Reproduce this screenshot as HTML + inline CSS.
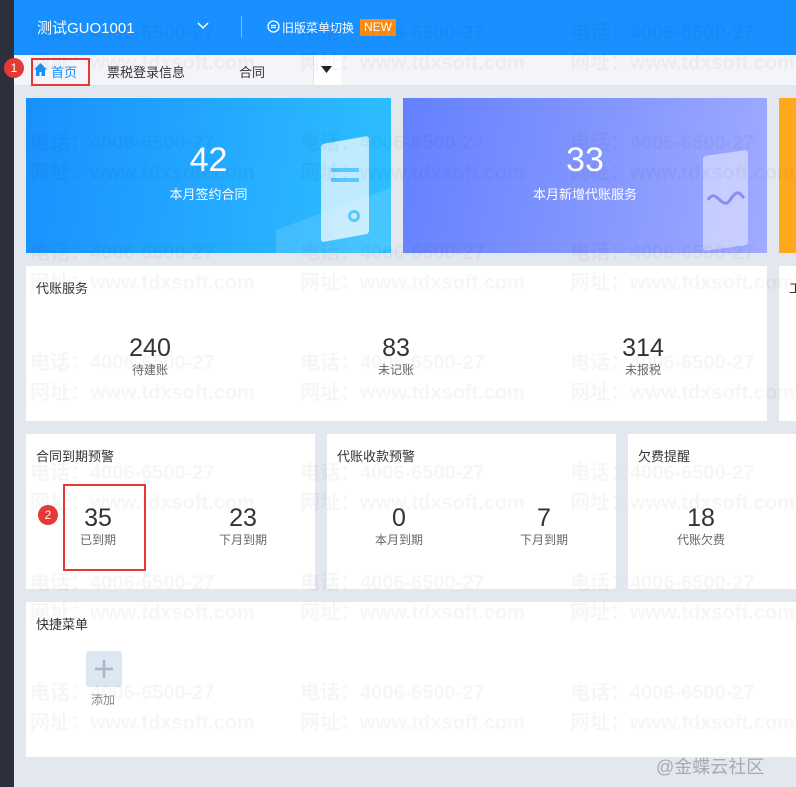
<!DOCTYPE html>
<html><head><meta charset="utf-8">
<style>
*{margin:0;padding:0;box-sizing:border-box}
body{width:796px;height:787px;overflow:hidden;background:#e3e7ee;font-family:"Liberation Sans","Noto Sans CJK SC",sans-serif;position:relative;color:#333}
.side{position:absolute;left:0;top:0;width:14px;height:787px;background:#2d2f3d}
.hdr{position:absolute;left:14px;top:0;right:0;height:55px;background:#1890ff;color:#fff}
.tabs{position:absolute;left:14px;top:55px;right:0;height:31px;background:#f3f5f8;border-bottom:1px solid #e0e4ea}
.card{position:absolute;background:#fff}
.t{position:absolute;left:10px;top:12px;font-size:13px;color:#333}
.st{position:absolute;text-align:center;transform:translateX(-50%)}
.st b{display:block;font-weight:normal;font-size:25px;color:#333;line-height:28px}
.st i{display:block;font-style:normal;font-size:12px;color:#666;line-height:16px}
.wm{position:absolute;font-size:20px;font-weight:bold;color:rgba(0,0,0,0.035);white-space:nowrap;pointer-events:none;z-index:5}
</style></head><body>
<div class="side"></div>
<div class="hdr">
 <div style="position:absolute;left:23px;top:17px;font-size:15px">测试GUO1001</div>
 <svg style="position:absolute;left:183px;top:22px" width="12" height="8"><path d="M1 1l5 5 5-5" stroke="#fff" stroke-width="1.5" fill="none"/></svg>
 <div style="position:absolute;left:227px;top:16px;width:1px;height:22px;background:rgba(255,255,255,.4)"></div>
 <svg style="position:absolute;left:253px;top:20px" width="13" height="13"><circle cx="6.5" cy="6.5" r="5.5" stroke="#fff" stroke-width="1.3" fill="none"/><path d="M4 5.5h5M4 7.5h5" stroke="#fff" stroke-width="1.2"/></svg>
 <div style="position:absolute;left:268px;top:19px;font-size:12px;letter-spacing:0">旧版菜单切换</div>
 <div style="position:absolute;left:346px;top:19px;background:#fa8c16;font-size:12px;padding:1px 4px;line-height:15px">NEW</div>
</div>
<div class="tabs">
 <div style="position:absolute;left:17px;top:3px;width:59px;height:28px;border:2px solid #e53935"></div>
 <svg style="position:absolute;left:19px;top:7px" width="15" height="15"><path d="M7.5 1L1 7.5h2V14h3.5V10h2v4H12V7.5h2z" fill="#1890ff"/></svg>
 <div style="position:absolute;left:37px;top:7px;font-size:13px;color:#1890ff">首页</div>
 <div style="position:absolute;left:93px;top:7px;font-size:13px;color:#333">票税登录信息</div>
 <div style="position:absolute;left:225px;top:7px;font-size:13px;color:#333">合同</div>
 <div style="position:absolute;left:299px;top:0;width:28px;height:30px;background:#fff;border-left:1px solid #e6e6e6"></div>
 <svg style="position:absolute;left:307px;top:11px" width="11" height="7"><path d="M0 0h11L5.5 7z" fill="#222"/></svg>
</div>
<div style="position:absolute;left:4px;top:58px;width:20px;height:20px;border-radius:50%;background:#e53935;color:#fff;font-size:12px;text-align:center;line-height:20px;z-index:6">1</div>

<div class="card" style="left:26px;top:98px;width:365px;height:155px;background:linear-gradient(100deg,#1890ff,#2ec0ff);overflow:hidden">
 <div style="position:absolute;left:250px;top:110px;width:120px;height:60px;background:rgba(255,255,255,.12);transform:skewY(-20deg)"></div>
 <div style="position:absolute;left:295px;top:42px;width:48px;height:98px;background:rgba(255,255,255,.7);border-radius:3px;transform:skewY(-10deg)"></div>
 <div style="position:absolute;left:305px;top:70px;width:28px;height:4px;background:#5ac8ff"></div>
 <div style="position:absolute;left:305px;top:80px;width:28px;height:4px;background:#5ac8ff"></div>
 <div style="position:absolute;left:322px;top:112px;width:12px;height:12px;border:3px solid #5ac8ff;border-radius:50%"></div>
 <div style="position:absolute;left:0;right:0;top:42px;text-align:center;color:#fff;font-size:34px;line-height:40px">42</div>
 <div style="position:absolute;left:0;right:0;top:86px;text-align:center;color:#fff;font-size:13px">本月签约合同</div>
</div>
<div class="card" style="left:403px;top:98px;width:364px;height:155px;background:linear-gradient(100deg,#6380ff,#a0aaff);overflow:hidden">
 <div style="position:absolute;left:300px;top:55px;width:45px;height:95px;background:rgba(255,255,255,.45);border-radius:3px;transform:skewY(-8deg)"></div>
 <svg style="position:absolute;left:303px;top:90px" width="40" height="24"><path d="M2 12c8-14 14 12 22 0s10-6 14-2" stroke="#8b8df0" stroke-width="3" fill="none"/></svg>
 <div style="position:absolute;left:0;right:0;top:42px;text-align:center;color:#fff;font-size:34px;line-height:40px">33</div>
 <div style="position:absolute;left:0;right:0;top:86px;text-align:center;color:#fff;font-size:13px">本月新增代账服务</div>
</div>
<div class="card" style="left:779px;top:98px;width:17px;height:155px;background:#ffa81c"></div>

<div class="card" style="left:26px;top:266px;width:741px;height:155px">
 <div class="t">代账服务</div>
 <div class="st" style="left:124px;top:68px"><b>240</b><i>待建账</i></div>
 <div class="st" style="left:370px;top:68px"><b>83</b><i>未记账</i></div>
 <div class="st" style="left:617px;top:68px"><b>314</b><i>未报税</i></div>
</div>
<div class="card" style="left:779px;top:266px;width:17px;height:155px"><div class="t" style="left:10px">工</div></div>

<div class="card" style="left:26px;top:434px;width:289px;height:155px">
 <div class="t">合同到期预警</div>
 <div class="st" style="left:72px;top:70px"><b>35</b><i>已到期</i></div>
 <div class="st" style="left:217px;top:70px"><b>23</b><i>下月到期</i></div>
</div>
<div style="position:absolute;left:63px;top:484px;width:83px;height:87px;border:2px solid #e53935;z-index:6"></div>
<div style="position:absolute;left:38px;top:505px;width:20px;height:20px;border-radius:50%;background:#e53935;color:#fff;font-size:12px;text-align:center;line-height:20px;z-index:6">2</div>
<div class="card" style="left:327px;top:434px;width:289px;height:155px">
 <div class="t">代账收款预警</div>
 <div class="st" style="left:72px;top:70px"><b>0</b><i>本月到期</i></div>
 <div class="st" style="left:217px;top:70px"><b>7</b><i>下月到期</i></div>
</div>
<div class="card" style="left:628px;top:434px;width:168px;height:155px">
 <div class="t">欠费提醒</div>
 <div class="st" style="left:73px;top:70px"><b>18</b><i>代账欠费</i></div>
</div>

<div class="card" style="left:26px;top:602px;width:770px;height:155px">
 <div class="t">快捷菜单</div>
 <div style="position:absolute;left:60px;top:49px;width:36px;height:36px;background:#dde7f2;border-radius:3px"></div>
 <svg style="position:absolute;left:68px;top:57px" width="20" height="20"><path d="M10 1v18M1 10h18" stroke="#a8b6c8" stroke-width="2.5"/></svg>
 <div style="position:absolute;left:65px;top:89px;font-size:12px;color:#888">添加</div>
</div>
<div style="position:absolute;left:656px;top:753px;font-size:18px;color:rgba(120,120,120,.55);z-index:6">@金蝶云社区</div>

<div class="wm" style="left:30px;top:16px">电话：4006-6500-27</div><div class="wm" style="left:300px;top:16px">电话：4006-6500-27</div><div class="wm" style="left:570px;top:16px">电话：4006-6500-27</div>
<div class="wm" style="left:30px;top:46px">网址：www.tdxsoft.com</div><div class="wm" style="left:300px;top:46px">网址：www.tdxsoft.com</div><div class="wm" style="left:570px;top:46px">网址：www.tdxsoft.com</div>
<div class="wm" style="left:30px;top:126px">电话：4006-6500-27</div><div class="wm" style="left:300px;top:126px">电话：4006-6500-27</div><div class="wm" style="left:570px;top:126px">电话：4006-6500-27</div>
<div class="wm" style="left:30px;top:156px">网址：www.tdxsoft.com</div><div class="wm" style="left:300px;top:156px">网址：www.tdxsoft.com</div><div class="wm" style="left:570px;top:156px">网址：www.tdxsoft.com</div>
<div class="wm" style="left:30px;top:236px">电话：4006-6500-27</div><div class="wm" style="left:300px;top:236px">电话：4006-6500-27</div><div class="wm" style="left:570px;top:236px">电话：4006-6500-27</div>
<div class="wm" style="left:30px;top:266px">网址：www.tdxsoft.com</div><div class="wm" style="left:300px;top:266px">网址：www.tdxsoft.com</div><div class="wm" style="left:570px;top:266px">网址：www.tdxsoft.com</div>
<div class="wm" style="left:30px;top:346px">电话：4006-6500-27</div><div class="wm" style="left:300px;top:346px">电话：4006-6500-27</div><div class="wm" style="left:570px;top:346px">电话：4006-6500-27</div>
<div class="wm" style="left:30px;top:376px">网址：www.tdxsoft.com</div><div class="wm" style="left:300px;top:376px">网址：www.tdxsoft.com</div><div class="wm" style="left:570px;top:376px">网址：www.tdxsoft.com</div>
<div class="wm" style="left:30px;top:456px">电话：4006-6500-27</div><div class="wm" style="left:300px;top:456px">电话：4006-6500-27</div><div class="wm" style="left:570px;top:456px">电话：4006-6500-27</div>
<div class="wm" style="left:30px;top:486px">网址：www.tdxsoft.com</div><div class="wm" style="left:300px;top:486px">网址：www.tdxsoft.com</div><div class="wm" style="left:570px;top:486px">网址：www.tdxsoft.com</div>
<div class="wm" style="left:30px;top:566px">电话：4006-6500-27</div><div class="wm" style="left:300px;top:566px">电话：4006-6500-27</div><div class="wm" style="left:570px;top:566px">电话：4006-6500-27</div>
<div class="wm" style="left:30px;top:596px">网址：www.tdxsoft.com</div><div class="wm" style="left:300px;top:596px">网址：www.tdxsoft.com</div><div class="wm" style="left:570px;top:596px">网址：www.tdxsoft.com</div>
<div class="wm" style="left:30px;top:676px">电话：4006-6500-27</div><div class="wm" style="left:300px;top:676px">电话：4006-6500-27</div><div class="wm" style="left:570px;top:676px">电话：4006-6500-27</div>
<div class="wm" style="left:30px;top:706px">网址：www.tdxsoft.com</div><div class="wm" style="left:300px;top:706px">网址：www.tdxsoft.com</div><div class="wm" style="left:570px;top:706px">网址：www.tdxsoft.com</div>
</body></html>
